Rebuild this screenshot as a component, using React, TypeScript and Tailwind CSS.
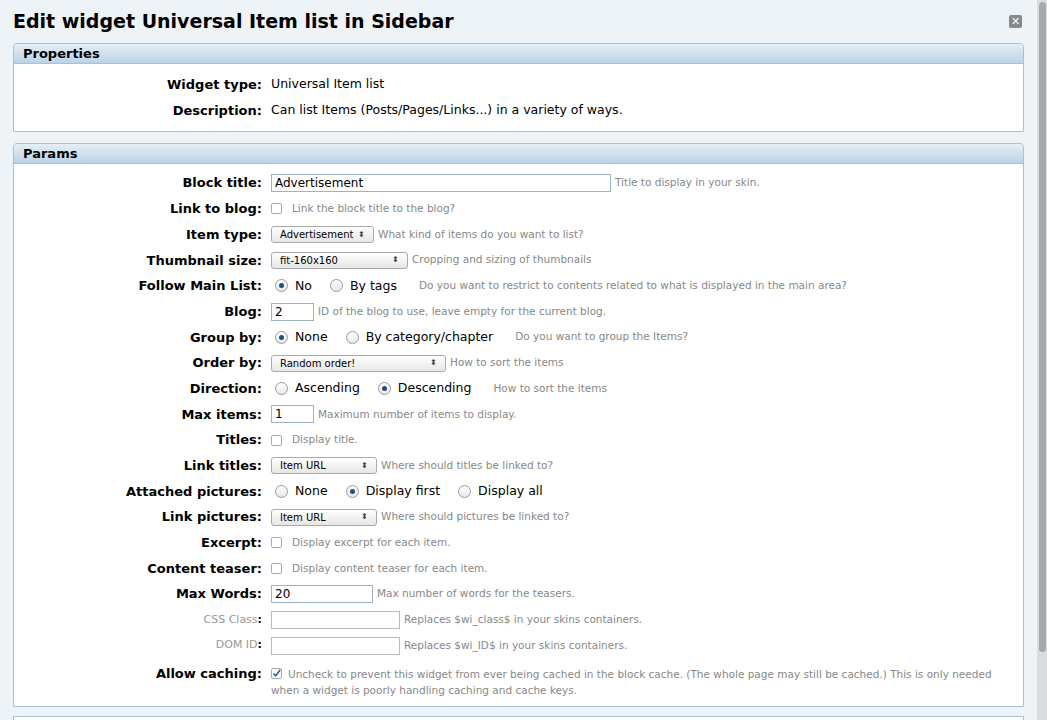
import React from 'react'

const font = { fontFamily: '"DejaVu Sans", Verdana, sans-serif' }

function Sel({ w, v }: { w: string; v: string }) {
  return (
    <span className={`${w} h-[17px] inline-flex items-center justify-between px-2 rounded-[3px] border border-[#aaa] bg-gradient-to-b from-white to-[#e6e6e6] text-[10px] text-black`}>
      {v}<span className="text-[8px] leading-none text-[#444]">⬍</span>
    </span>
  )
}
function Inp({ w, v = '', grayBorder }: { w: string; v?: string; grayBorder?: boolean }) {
  return <span className={`${w} h-[18px] inline-flex items-center px-[3px] border ${grayBorder ? 'border-[#bbb]' : 'border-[#9fb3c8]'} bg-white text-[12px] text-black`}>{v}</span>
}
function Radio({ on, label }: { on?: boolean; label: string }) {
  return (
    <span className="inline-flex items-center gap-[7px] mr-[18px] text-[12.5px] text-black">
      <span className="w-[13px] h-[13px] rounded-full border border-[#999] bg-gradient-to-b from-white to-[#e8e8e8] flex items-center justify-center">
        {on && <span className="w-[5px] h-[5px] rounded-full bg-[#1d4f8a]" />}
      </span>
      {label}
    </span>
  )
}
function Check({ on }: { on?: boolean }) {
  return (
    <span className="w-[11px] h-[11px] rounded-[2px] border border-[#aaa] bg-white inline-flex items-center justify-center mr-[6px] align-[-1px]">
      {on && <svg viewBox="0 0 12 12" className="w-[11px] h-[11px]"><path d="M2 6 L5 9 L11 1" stroke="#2a5aa8" strokeWidth="2" fill="none" /></svg>}
    </span>
  )
}
const Hint = ({ children }: { children: React.ReactNode }) => <span className="text-[10.5px] text-[#888] ml-[4px]">{children}</span>

function Row({ label, dim, children }: { label: string; dim?: boolean; children: React.ReactNode }) {
  return (
    <div className="flex items-center min-h-[25.7px]">
      <div className={`w-[257px] shrink-0 text-right pr-[9px] ${dim ? 'text-[11px] text-[#999] font-normal' : 'text-[13px] font-bold text-black'}`}>
        {label}<span className="font-bold text-black">:</span>
      </div>
      <div className="flex items-center flex-1">{children}</div>
    </div>
  )
}

function Panel({ title, children }: { title: string; children: React.ReactNode }) {
  return (
    <div className="shrink-0 border border-[#a9c1d6] rounded-t-[4px] bg-white mx-[13px]">
      <div className="h-[20px] px-[9px] flex items-center text-[13px] font-bold text-black bg-gradient-to-b from-[#e4eef6] to-[#bcd3e6] border-b border-[#a9c1d6] rounded-t-[4px]">{title}</div>
      {children}
    </div>
  )
}

export default function App() {
  return (
    <div className="w-[1047px] h-[720px] overflow-hidden bg-[#eef3f7] flex" style={font}>
      <div className="flex-1 flex flex-col">
        <div className="h-[43px] shrink-0 flex items-center justify-between px-[13px]">
          <h1 className="text-[19px] font-bold text-black">Edit widget Universal Item list in Sidebar</h1>
          <span className="w-[13px] h-[13px] bg-[#888] rounded-[2px] text-white text-[11px] leading-none flex items-center justify-center mr-[2px]">✕</span>
        </div>
        <Panel title="Properties">
          <div className="py-[8px]">
            <Row label="Widget type"><span className="text-[12.5px]">Universal Item list</span></Row>
            <Row label="Description"><span className="text-[12.5px]">Can list Items (Posts/Pages/Links...) in a variety of ways.</span></Row>
          </div>
        </Panel>
        <div className="h-[11px] shrink-0" />
        <Panel title="Params">
          <div className="pt-[6px] pb-[8px]">
            <Row label="Block title"><Inp w="w-[340px]" v="Advertisement" /><Hint>Title to display in your skin.</Hint></Row>
            <Row label="Link to blog"><Check /><Hint>Link the block title to the blog?</Hint></Row>
            <Row label="Item type"><Sel w="w-[103px]" v="Advertisement" /><Hint>What kind of items do you want to list?</Hint></Row>
            <Row label="Thumbnail size"><Sel w="w-[137px]" v="fit-160x160" /><Hint>Cropping and sizing of thumbnails</Hint></Row>
            <Row label="Follow Main List"><span className="ml-[4px]" /><Radio on label="No" /><Radio label="By tags" /><Hint>Do you want to restrict to contents related to what is displayed in the main area?</Hint></Row>
            <Row label="Blog"><Inp w="w-[43px]" v="2" /><Hint>ID of the blog to use, leave empty for the current blog.</Hint></Row>
            <Row label="Group by"><span className="ml-[4px]" /><Radio on label="None" /><Radio label="By category/chapter" /><Hint>Do you want to group the Items?</Hint></Row>
            <Row label="Order by"><Sel w="w-[175px]" v="Random order!" /><Hint>How to sort the items</Hint></Row>
            <Row label="Direction"><span className="ml-[4px]" /><Radio label="Ascending" /><Radio on label="Descending" /><Hint>How to sort the items</Hint></Row>
            <Row label="Max items"><Inp w="w-[43px]" v="1" /><Hint>Maximum number of items to display.</Hint></Row>
            <Row label="Titles"><Check /><Hint>Display title.</Hint></Row>
            <Row label="Link titles"><Sel w="w-[106px]" v="Item URL" /><Hint>Where should titles be linked to?</Hint></Row>
            <Row label="Attached pictures"><span className="ml-[4px]" /><Radio label="None" /><Radio on label="Display first" /><Radio label="Display all" /></Row>
            <Row label="Link pictures"><Sel w="w-[106px]" v="Item URL" /><Hint>Where should pictures be linked to?</Hint></Row>
            <Row label="Excerpt"><Check /><Hint>Display excerpt for each item.</Hint></Row>
            <Row label="Content teaser"><Check /><Hint>Display content teaser for each item.</Hint></Row>
            <Row label="Max Words"><Inp w="w-[102px]" v="20" /><Hint>Max number of words for the teasers.</Hint></Row>
            <Row label="CSS Class" dim><Inp w="w-[129px]" grayBorder /><Hint>Replaces $wi_class$ in your skins containers.</Hint></Row>
            <Row label="DOM ID" dim><Inp w="w-[129px]" grayBorder /><Hint>Replaces $wi_ID$ in your skins containers.</Hint></Row>
            <div className="flex items-start pt-[6px]">
              <div className="w-[257px] shrink-0 text-right pr-[9px] text-[13px] font-bold">Allow caching:</div>
              <div className="flex-1 pt-[2px] pr-[20px] text-[10.5px] text-[#888] leading-[16px]">
                <Check on />Uncheck to prevent this widget from ever being cached in the block cache. (The whole page may still be cached.) This is only needed when a widget is poorly handling caching and cache keys.
              </div>
            </div>
          </div>
        </Panel>
        <div className="h-[9px] shrink-0" />
        <div className="shrink-0 border border-[#a9c1d6] bg-white mx-[13px] h-[20px] flex items-end pl-[257px] gap-[6px]">
          <span className="w-[53px] h-[8px] border border-b-0 border-[#999] rounded-t-[3px]" />
          <span className="w-[46px] h-[8px] border border-b-0 border-[#999] rounded-t-[3px]" />
        </div>
      </div>
      <div className="w-[10px] bg-[#d9dde0] flex justify-center pt-[2px]">
        <div className="w-[7px] h-[650px] rounded-full bg-[#a8a8a8]" />
      </div>
    </div>
  )
}
